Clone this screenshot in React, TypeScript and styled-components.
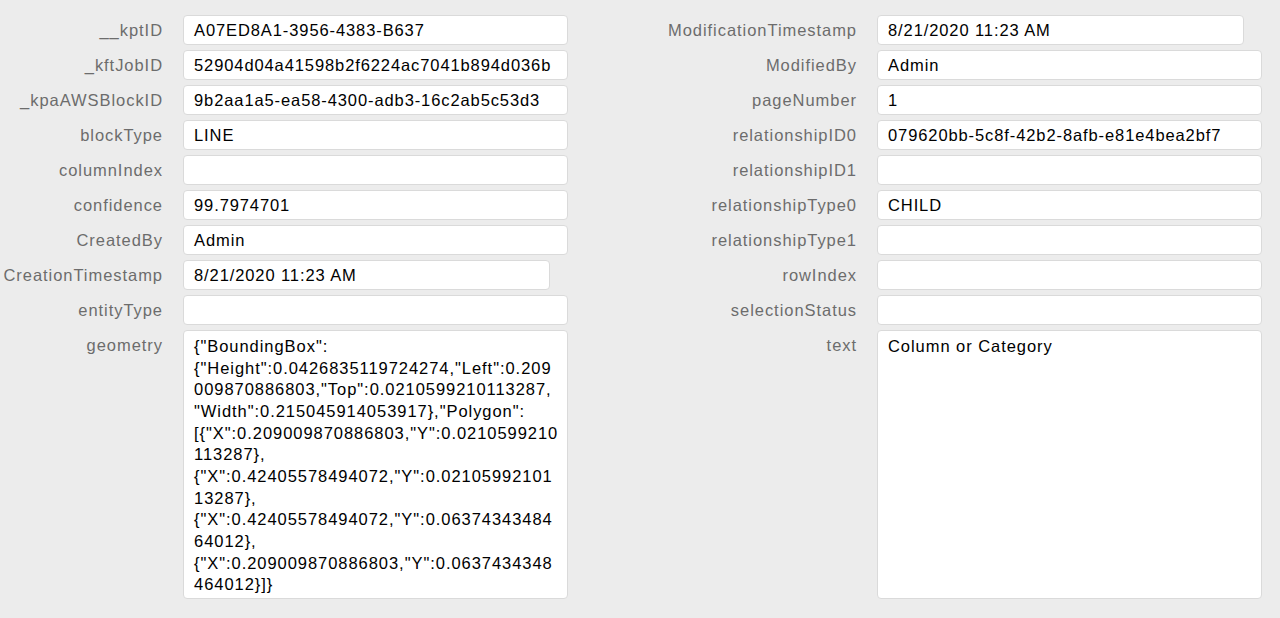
import React from "react";
import styled, { createGlobalStyle } from "styled-components";

const GlobalStyle = createGlobalStyle`
  html, body {
    margin: 0;
    padding: 0;
    background: #ececec;
  }
  body {
    font-family: "Liberation Sans", Arial, Helvetica, sans-serif;
  }
`;

const Page = styled.div`
  display: flex;
  gap: 20px;
  padding-top: 15px;
  height: 618px;
  box-sizing: border-box;
  background: #ececec;
  overflow: hidden;
`;

const Column = styled.div`
  display: flex;
  flex-direction: column;
  gap: 5px;
`;

const Row = styled.div<{ $labelWidth: number }>`
  display: grid;
  grid-template-columns: ${(p) => p.$labelWidth}px 385px;
  column-gap: 20px;
  align-items: start;
`;

const Label = styled.div`
  text-align: right;
  line-height: 30px;
  font-size: 16.5px;
  letter-spacing: 0.95px;
  color: #6c6c6c;
  white-space: nowrap;
`;

const Field = styled.div<{ $width?: number }>`
  box-sizing: border-box;
  width: ${(p) => (p.$width ? `${p.$width}px` : "100%")};
  height: 30px;
  padding: 0 10px;
  background: #fff;
  border: 1px solid #dadada;
  border-radius: 4px;
  font-size: 16.5px;
  letter-spacing: 0.9px;
  line-height: 28px;
  color: #000;
  white-space: nowrap;
  overflow: hidden;
`;

const TextBox = styled.div`
  box-sizing: border-box;
  width: 100%;
  height: 269px;
  padding: 5px 10px;
  background: #fff;
  border: 1px solid #dadada;
  border-radius: 4px;
  font-size: 16.5px;
  letter-spacing: 0.95px;
  line-height: 21.65px;
  color: #000;
  white-space: pre;
  overflow: hidden;
`;

type Item = { label: string; value: string; width?: number; multiline?: boolean };

const geometry = [
  '{"BoundingBox":',
  '{"Height":0.0426835119724274,"Left":0.209',
  '009870886803,"Top":0.0210599210113287,',
  '"Width":0.215045914053917},"Polygon":',
  '[{"X":0.209009870886803,"Y":0.0210599210',
  "113287},",
  '{"X":0.42405578494072,"Y":0.02105992101',
  "13287},",
  '{"X":0.42405578494072,"Y":0.06374343484',
  "64012},",
  '{"X":0.209009870886803,"Y":0.0637434348',
  "464012}]}",
].join("\n");

const left: Item[] = [
  { label: "__kptID", value: "A07ED8A1-3956-4383-B637" },
  { label: "_kftJobID", value: "52904d04a41598b2f6224ac7041b894d036b" },
  { label: "_kpaAWSBlockID", value: "9b2aa1a5-ea58-4300-adb3-16c2ab5c53d3" },
  { label: "blockType", value: "LINE" },
  { label: "columnIndex", value: "" },
  { label: "confidence", value: "99.7974701" },
  { label: "CreatedBy", value: "Admin" },
  { label: "CreationTimestamp", value: "8/21/2020 11:23 AM", width: 367 },
  { label: "entityType", value: "" },
  { label: "geometry", value: geometry, multiline: true },
];

const right: Item[] = [
  { label: "ModificationTimestamp", value: "8/21/2020 11:23 AM", width: 367 },
  { label: "ModifiedBy", value: "Admin" },
  { label: "pageNumber", value: "1" },
  { label: "relationshipID0", value: "079620bb-5c8f-42b2-8afb-e81e4bea2bf7" },
  { label: "relationshipID1", value: "" },
  { label: "relationshipType0", value: "CHILD" },
  { label: "relationshipType1", value: "" },
  { label: "rowIndex", value: "" },
  { label: "selectionStatus", value: "" },
  { label: "text", value: "Column or Category", multiline: true },
];

const FieldList: React.FC<{ items: Item[]; labelWidth: number }> = ({ items, labelWidth }) => (
  <Column>
    {items.map((it) => (
      <Row key={it.label} $labelWidth={labelWidth}>
        <Label>{it.label}</Label>
        {it.multiline ? <TextBox>{it.value}</TextBox> : <Field $width={it.width}>{it.value}</Field>}
      </Row>
    ))}
  </Column>
);

export default function App() {
  return (
    <>
      <GlobalStyle />
      <Page>
        <FieldList items={left} labelWidth={163} />
        <FieldList items={right} labelWidth={269} />
      </Page>
    </>
  );
}
